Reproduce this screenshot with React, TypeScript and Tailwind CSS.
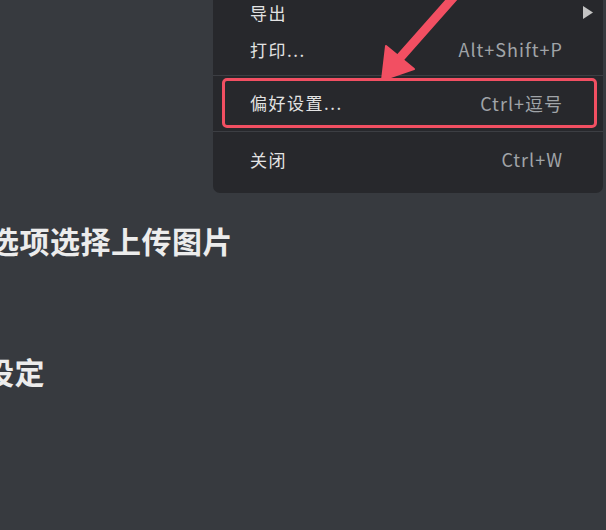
const cjk = { fontFamily: '"Noto Sans CJK SC", "Noto Sans", sans-serif' }

function MenuRow({ label, shortcut, submenu }: { label: string; shortcut?: string; submenu?: boolean }) {
  return (
    <div className="flex h-[37px] items-center justify-between pl-[37px] pr-[40px]">
      <span className="text-[17px] tracking-[1.5px] text-[#e3e3e3]">{label}</span>
      {shortcut && <span className="text-[18px] tracking-[1px] text-[#a0a4a8]">{shortcut}</span>}
      {submenu && (
        <svg width="10" height="13" viewBox="0 0 10 13" className="-mr-[30px]">
          <path d="M0 0 L10 6.5 L0 13 Z" fill="#c4c4c4" />
        </svg>
      )}
    </div>
  )
}

export default function App() {
  return (
    <div className="relative h-[530px] w-[606px] overflow-hidden bg-[#373a3f]" style={cjk}>
      {/* page content behind the menu */}
      <div className="pt-[222px] font-bold text-[30px] leading-[36px] tracking-[0.5px] text-[#ececec]">
        <div className="-ml-[11px] whitespace-nowrap">选项选择上传图片</div>
        <div className="mt-[95px] -ml-[16px] whitespace-nowrap">设定</div>
      </div>

      {/* context menu */}
      <div className="absolute left-[213px] top-[-6px] w-[390px] rounded-b-[7px] bg-[#27282c] pb-[15px]">
        <MenuRow label="导出" submenu />
        <MenuRow label="打印..." shortcut="Alt+Shift+P" />
        <div className="mt-[7px] h-px bg-[#3c3e43]" />
        <div className="ml-[9px] mr-[6px] mt-[2px] mb-[3px] flex h-[50px] items-center justify-between rounded-[5px] border-[3px] border-[#f24f62] pl-[25px] pr-[31px]">
          <span className="text-[17px] tracking-[1.5px] text-[#e3e3e3]">偏好设置...</span>
          <span className="text-[18px] tracking-[1px] text-[#a0a4a8]">Ctrl+逗号</span>
        </div>
        <div className="h-px bg-[#3c3e43]" />
        <div className="pt-[9px]">
          <MenuRow label="关闭" shortcut="Ctrl+W" />
        </div>
      </div>

      {/* annotation arrow */}
      <svg className="absolute left-0 top-0" width="606" height="100" viewBox="0 0 606 100">
        <line x1="460" y1="-10" x2="399" y2="59" stroke="#f24f62" strokeWidth="9" strokeLinecap="round" />
        <polygon points="382,80 386,46 414,69" fill="#f24f62" stroke="#f24f62" strokeWidth="2" strokeLinejoin="round" />
      </svg>
    </div>
  )
}
